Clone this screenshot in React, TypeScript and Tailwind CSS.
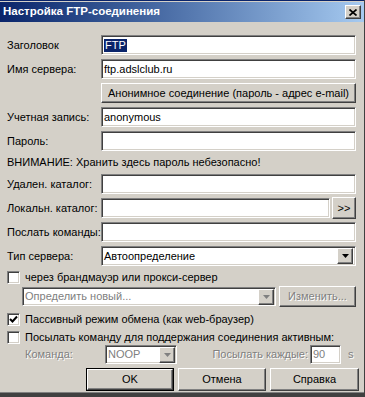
import type { ReactNode } from 'react';

const sunken =
  'bg-white border border-t-[#808080] border-l-[#808080] border-r-white border-b-white shadow-[inset_1px_1px_0_#404040,inset_-1px_-1px_0_#d4d0c8]';
const raised =
  'bg-[#d4d0c8] border border-t-white border-l-white border-r-[#404040] border-b-[#404040] shadow-[inset_-1px_-1px_0_#808080,inset_1px_1px_0_#d4d0c8]';
const disabledText = 'text-[#808080] [text-shadow:1px_1px_0_#ffffff]';

function Arrow({ disabled }: { disabled?: boolean }) {
  return (
    <div className={`${raised} w-[16px] h-[16px] flex items-center justify-center shrink-0`}>
      <svg width="7" height="4" viewBox="0 0 7 4">
        <path d="M0 0H7L3.5 4Z" fill={disabled ? '#808080' : '#000'} />
      </svg>
    </div>
  );
}

function Field({ children, className = '' }: { children?: ReactNode; className?: string }) {
  return (
    <div className={`${sunken} h-[20px] flex items-center pl-[2px] ${className}`}>
      {children}
    </div>
  );
}

function Row({ label, children }: { label: string; children: ReactNode }) {
  return (
    <div className="flex items-center h-[20px] mb-[4px]">
      <span className="w-[94px] shrink-0">{label}</span>
      {children}
    </div>
  );
}

function CheckBox({ checked }: { checked?: boolean }) {
  return (
    <div className={`${sunken} w-[13px] h-[13px] shrink-0 flex items-center justify-center`}>
      {checked && (
        <svg width="9" height="9" viewBox="0 0 9 9">
          <path d="M1 4 L3.5 6.5 L8 1.5" stroke="#000" strokeWidth="2" fill="none" />
        </svg>
      )}
    </div>
  );
}

export default function App() {
  return (
    <div className="w-[365px] h-[397px] bg-[#d4d0c8] overflow-hidden flex flex-col text-[11px] leading-none whitespace-nowrap text-black font-['Liberation_Sans',Arial,sans-serif] border-r border-r-[#404040]">
      <div className="h-[2px] bg-[#d4d0c8] border-t border-t-[#0a246a] shrink-0" />
      <div className="h-[20px] shrink-0 flex items-center justify-between pl-[3px] pr-[3px] bg-gradient-to-r from-[#0a246a] to-[#a6caf0]">
        <span className="text-white font-bold text-[11.5px]">Настройка FTP-соединения</span>
        <div className={`${raised} w-[16px] h-[14px] flex items-center justify-center`}>
          <svg width="8" height="7" viewBox="0 0 8 7">
            <path d="M0.5 0.5L7.5 6.5M7.5 0.5L0.5 6.5" stroke="#000" strokeWidth="1.7" />
          </svg>
        </div>
      </div>

      <div className="flex-1 pl-[7px] pr-[8px] pt-[13px]">
        <Row label="Заголовок">
          <Field className="flex-1">
            <span className="bg-[#0a246a] text-white px-[1px] py-[1px]">FTP</span>
          </Field>
        </Row>
        <Row label="Имя сервера:">
          <Field className="flex-1">ftp.adslclub.ru</Field>
        </Row>
        <div className="flex h-[20px] mb-[4px] pl-[94px]">
          <button className={`${raised} flex-1 flex items-center justify-center`}>
            Анонимное соединение (пароль - адрес e-mail)
          </button>
        </div>
        <Row label="Учетная запись:">
          <Field className="flex-1">anonymous</Field>
        </Row>
        <Row label="Пароль:">
          <Field className="flex-1" />
        </Row>
        <div className="h-[15px] mb-[4px] flex items-center">
          ВНИМАНИЕ: Хранить здесь пароль небезопасно!
        </div>
        <Row label="Удален. каталог:">
          <Field className="flex-1" />
        </Row>
        <Row label="Локальн. каталог:">
          <Field className="flex-1" />
          <button className={`${raised} w-[24px] h-[22px] ml-[2px] flex items-center justify-center`}>
            &gt;&gt;
          </button>
        </Row>
        <Row label="Послать команды:">
          <Field className="flex-1" />
        </Row>
        <Row label="Тип сервера:">
          <Field className="flex-1 justify-between pr-[2px]">
            <span>Автоопределение</span>
            <Arrow />
          </Field>
        </Row>

        <div className="flex items-center h-[14px] mt-[1px] gap-[5px]">
          <CheckBox />
          <span>через брандмауэр или прокси-сервер</span>
        </div>
        <div className="flex items-center h-[21px] mt-[2px] pl-[15px]">
          <div className={`${sunken} w-[254px] h-[19px] flex items-center justify-between pl-[2px] pr-[1px]`}>
            <span className={disabledText}>Определить новый...</span>
            <Arrow disabled />
          </div>
          <button className={`${raised} ml-[3px] flex-1 h-[21px] flex items-center justify-center ${disabledText}`}>
            Изменить...
          </button>
        </div>
        <div className="flex items-center h-[14px] mt-[5px] gap-[5px]">
          <CheckBox checked />
          <span>Пассивный режим обмена (как web-браузер)</span>
        </div>
        <div className="flex items-center h-[14px] mt-[4px] gap-[5px]">
          <CheckBox />
          <span>Посылать команду для поддержания соединения активным:</span>
        </div>
        <div className="flex items-center h-[19px] mt-[1px]">
          <span className={`w-[98px] pl-[18px] ${disabledText}`}>Команда:</span>
          <div className={`${sunken} w-[72px] h-[19px] flex items-center justify-between pl-[2px] pr-[1px]`}>
            <span className={disabledText}>NOOP</span>
            <Arrow disabled />
          </div>
          <span className={`w-[133px] text-right pr-[2px] ${disabledText}`}>Посылать каждые:</span>
          <div className={`${sunken} w-[31px] h-[19px] flex items-center pl-[2px]`}>
            <span className={disabledText}>90</span>
          </div>
          <span className={`ml-[7px] ${disabledText}`}>s</span>
        </div>
        <div className="flex items-center h-[23px] mt-[4px] pl-[79px] gap-[4px] -mr-[3px]">
          <div className="border border-black w-[89px] h-[23px] flex">
            <button className={`${raised} flex-1 flex items-center justify-center`}>OK</button>
          </div>
          <button className={`${raised} w-[89px] h-[23px] flex items-center justify-center`}>Отмена</button>
          <button className={`${raised} w-[90px] h-[23px] flex items-center justify-center`}>Справка</button>
        </div>
      </div>

      <div className="h-[5px] shrink-0 border-t border-t-[#808080] bg-[#404040]" />
    </div>
  );
}
